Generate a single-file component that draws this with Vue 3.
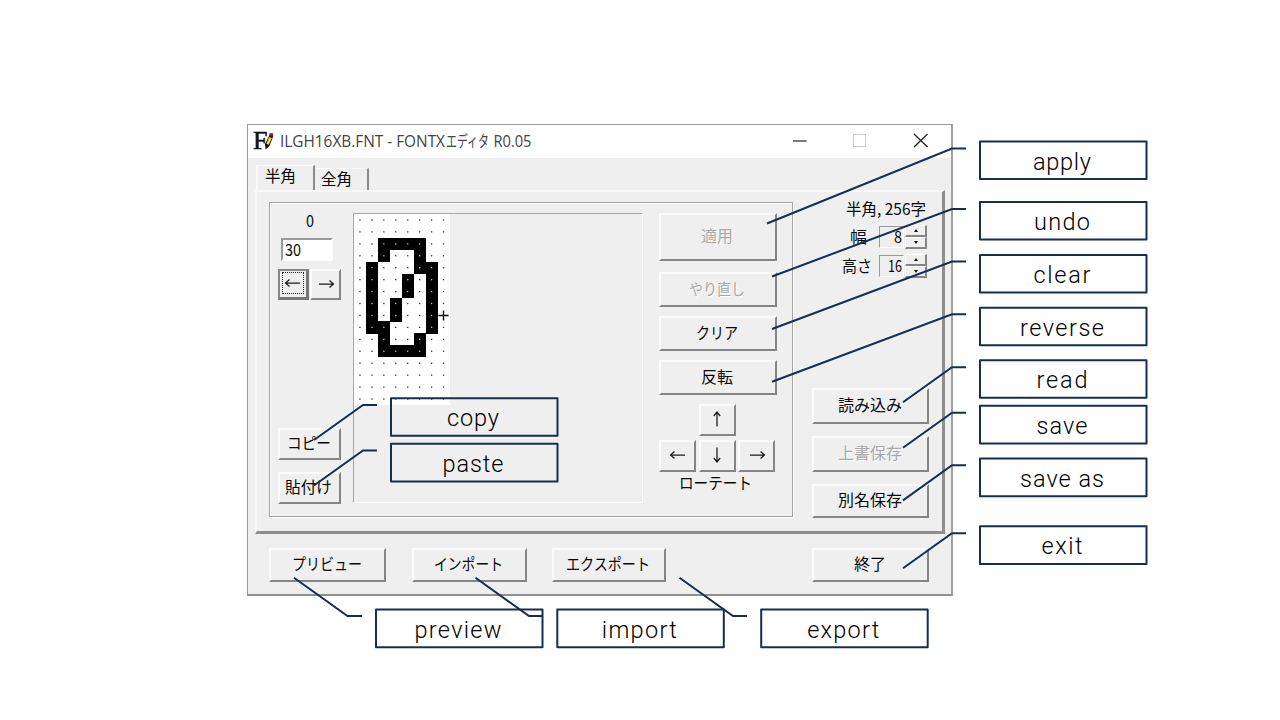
<script setup>
import { h } from 'vue'

const family = '"Noto Sans CJK JP", "Liberation Sans", sans-serif'

// Dialog caption condensed to a fixed width
const Label = (p) =>
  h('svg', { width: p.w, height: 20, viewBox: `0 0 ${p.w} 20`, style: { overflow: 'visible', display: 'block', flex: 'none' } }, [
    h('text', { x: -1, y: 15.5, 'font-family': family, 'font-size': p.size || 16, fill: p.disabled ? '#a8a8a8' : '#080808', textLength: p.w, lengthAdjust: 'spacingAndGlyphs', style: p.disabled ? { textShadow: '1px 1px #fff' } : null }, p.text),
  ])
Label.props = ['text', 'w', 'disabled', 'size']

const arrowPaths = {
  left: 'M1.5 9H16M5.5 5.5L1.5 9L5.5 12.5',
  right: 'M2 9H16.5M12.5 5.5L16.5 9L12.5 12.5',
  up: 'M9 2V16.5M5.8 6L9 2L12.2 6',
  down: 'M9 1.5V16M5.8 12L9 16L12.2 12',
}
const Arrow = (p) =>
  h('svg', { width: 18, height: 18, viewBox: '0 0 18 18', style: { display: 'block' } }, [
    h('path', { d: arrowPaths[p.dir], fill: 'none', stroke: '#1a1a1a', 'stroke-width': 1.25 }),
  ])
Arrow.props = ['dir']

const glyph = [
  '........', '........', '..####..', '..#..#..', '.#...##.', '.#..#.#.', '.#..#.#.', '.#.#..#.',
  '.#.#..#.', '.##...#.', '..#..#..', '..####..', '........', '........', '........', '........',
]
const step = 11.94
const cells = glyph.flatMap((row, r) => [...row].map((v, c) => ({ x: c * step, y: r * step, on: v === '#' })))

const side = 979
const callouts = [
  { t: 'apply', x: side, y: 140.5, w: 58, line: '767,223.5 952,148.5 966,148.5' },
  { t: 'undo', x: side, y: 201, w: 56, line: '772,276.5 952,209 966,209' },
  { t: 'clear', x: side, y: 254, w: 57, line: '772,329 952,261.5 966,261.5' },
  { t: 'reverse', x: side, y: 306.7, w: 84, line: '772,381.8 952,314.3 966,314.3' },
  { t: 'read', x: side, y: 359.2, w: 51, line: '903,402.3 952,367.3 966,367.3' },
  { t: 'save', x: side, y: 404.8, w: 51, line: '903,447.7 952,412.7 966,412.7' },
  { t: 'save as', x: side, y: 457.6, w: 84, line: '903,500.4 952,465.3 966,465.3' },
  { t: 'exit', x: side, y: 525.3, w: 41, line: '903,568.3 952,533.3 966,533.3' },
  { t: 'copy', x: 390, y: 397.2, w: 52, line: '314,440 363,405 377,405' },
  { t: 'paste', x: 390, y: 442.8, w: 61, line: '314,485.5 363,450.5 377,450.5' },
  { t: 'preview', x: 375, y: 608.6, w: 87, line: '294,577.7 347.5,616 362,616' },
  { t: 'import', x: 556.3, y: 608.6, w: 75, line: '475.5,577.7 529,616 543,616' },
  { t: 'export', x: 760.2, y: 608.6, w: 72, line: '679.5,577.7 733,616 747,616' },
]
</script>

<template>
  <main class="stage">
    <section class="window">
      <header class="titlebar">
        <svg class="app-icon" width="22" height="22" viewBox="0 0 22 22">
          <text x="0" y="19" font-family="Liberation Serif, serif" font-size="25" textLength="14.5" lengthAdjust="spacingAndGlyphs" fill="#111" stroke="#111" stroke-width=".5">F</text>
          <path d="M17 4L20.5 5.5L16.5 16L12.5 19.5L12 14Z" fill="#111" />
          <path d="M16.2 7L18.8 8L15.8 14.8L13.4 13.8Z" fill="#f2e51c" />
          <path d="M16.2 3.5L19.8 3L20 6.8L17 6.5Z" fill="#7d1e1a" />
        </svg>
        <svg class="title" width="252" height="24" viewBox="0 0 252 24" fill="#444" font-size="16" font-family="Open Sans, Noto Sans CJK JP, sans-serif">
          <text x="0" y="17.5" textLength="165" lengthAdjust="spacingAndGlyphs">ILGH16XB.FNT - FONTX</text>
          <text x="166" y="17.5" textLength="43" lengthAdjust="spacingAndGlyphs">エディタ</text>
          <text x="213.5" y="17.5" textLength="38" lengthAdjust="spacingAndGlyphs">R0.05</text>
        </svg>
        <svg class="controls" width="136" height="16" viewBox="0 0 136 16" fill="none">
          <path d="M1 9H14.5" stroke="#333" stroke-width="1.3" />
          <rect x="61.5" y="2.5" width="12" height="12" stroke="#ccc" />
          <path d="M122 2L135.500 15M135.500 2L122 15" stroke="#222" stroke-width="1.3" />
        </svg>
      </header>

      <nav class="tabs">
        <div class="tab active"><Label text="半角" :w="31" /></div>
        <div class="tab"><Label text="全角" :w="31" /></div>
      </nav>

      <div class="panel">
        <div class="group">
          <div class="code-col">
            <div class="char"><Label text="0" :w="8" /></div>
            <div class="field code"><Label text="30" :w="16" /></div>
            <div class="pair">
              <button class="btn focused"><span class="dotted"><Arrow dir="left" /></span></button>
              <button class="btn"><Arrow dir="right" /></button>
            </div>
            <button class="btn copy"><Label text="コピー" :w="44" /></button>
            <button class="btn paste"><Label text="貼付け" :w="47" /></button>
          </div>

          <div class="canvas">
            <svg width="96" height="191" viewBox="0 0 96 191">
              <rect width="96" height="191" fill="#fff" />
              <template v-for="(c, i) in cells" :key="i">
                <rect v-if="c.on" :x="c.x" :y="c.y" width="12.1" height="12.1" fill="#000" shape-rendering="crispEdges" />
                <rect :x="c.x + 5.3" :y="c.y + 5.3" width="1.3" height="1.3" :fill="c.on ? '#bbb' : '#333'" />
              </template>
              <path d="M84.500 101.500H94.500M89.500 96.500V106.500" stroke="#000" stroke-width="1.4" />
            </svg>
          </div>

          <div class="edit-col">
            <button class="btn tall"><Label text="適用" :w="32" disabled="1" /></button>
            <button class="btn undo"><Label text="やり直し" :w="56" disabled="1" /></button>
            <button class="btn clear"><Label text="クリア" :w="42" /></button>
            <button class="btn reverse"><Label text="反転" :w="32" /></button>
            <div class="arrows">
              <button class="btn up"><Arrow dir="up" /></button>
              <button class="btn"><Arrow dir="left" /></button>
              <button class="btn"><Arrow dir="down" /></button>
              <button class="btn"><Arrow dir="right" /></button>
            </div>
            <div class="rotate"><Label text="ローテート" :w="73" /></div>
          </div>
        </div>

        <aside class="info">
          <div class="summary"><Label text="半角, 256字" :w="80" /></div>
          <div class="size-row">
            <Label text="幅" :w="17" />
            <div class="field num"><Label text="8" :w="8" /></div>
            <div class="spin"><i class="inc"></i><i class="dec"></i></div>
          </div>
          <div class="size-row">
            <Label text="高さ" :w="30" />
            <div class="field num"><Label text="16" :w="14" /></div>
            <div class="spin"><i class="inc"></i><i class="dec"></i></div>
          </div>
          <div class="files">
            <button class="btn"><Label text="読み込み" :w="64" /></button>
            <button class="btn"><Label text="上書保存" :w="64" disabled="1" /></button>
            <button class="btn last"><Label text="別名保存" :w="64" /></button>
          </div>
        </aside>
      </div>

      <footer class="bottom">
        <button class="btn b1"><Label text="プリビュー" :w="70" /></button>
        <button class="btn b2"><Label text="インポート" :w="69" /></button>
        <button class="btn b3"><Label text="エクスポート" :w="84" /></button>
        <button class="btn b4"><Label text="終了" :w="32" /></button>
      </footer>
    </section>

    <svg class="annotations" width="1280" height="720" viewBox="0 0 1280 720">
      <g v-for="c in callouts" :key="c.t">
        <polyline :points="c.line" fill="none" stroke="#172e50" stroke-width="2" />
        <rect :x="c.x + 1" :y="c.y + 1" width="166.500" height="37.600" fill="none" stroke="#172e50" stroke-width="2" stroke-linejoin="round" />
        <text :x="c.x + 83 - c.w / 2" :y="c.y + 29" :textLength="c.w" font-family="Roboto, sans-serif" font-size="23.5" font-weight="300" fill="#000">{{ c.t }}</text>
      </g>
    </svg>
  </main>
</template>

<style scoped>
.stage {
  position: relative;
  width: 1280px;
  height: 720px;
  overflow: hidden;
  background: #fff;
  box-sizing: border-box;
  padding: 124px 0 0 247px;
}
.stage * { box-sizing: border-box; }
.window {
  width: 706px;
  height: 472px;
  background: #efefef;
  border: 1px solid #999;
  border-right: 2px solid #a0a0a0;
  border-bottom: 2px solid #909090;
}
.titlebar {
  display: flex;
  height: 33px;
  background: #fff;
  padding-left: 5px;
}
.app-icon { margin-top: 5px; overflow: visible; }
.title { margin: 4px 0 0 5px; overflow: visible; }
.controls { margin: 7px 0 0 260px; }
.tabs {
  display: flex;
  align-items: flex-end;
  height: 32px;
  padding-left: 8px;
}
.tab {
  width: 54px;
  height: 22px;
  padding: 0 0 0 7px;
  border-top: 1px solid #fafafa;
  border-right: 2px solid #8b8b8b;
}
.tab.active {
  width: 59px;
  height: 25px;
  padding: 0 0 0 8px;
  border-left: 2px solid #fafafa;
}
.panel {
  display: flex;
  width: 690px;
  height: 344px;
  margin-left: 7px;
  border-top: 2px solid #f9f9f9;
  border-left: 2px solid #f9f9f9;
  border-right: 3px solid #8e8e8e;
  border-bottom: 3px solid #8e8e8e;
}
.group {
  display: flex;
  width: 524px;
  height: 315px;
  margin: 10px 0 0 12px;
  border: 1px solid #a3a3a3;
  box-shadow: inset 1px 1px #fff, 1px 1px #fff;
}
.btn {
  display: flex;
  align-items: center;
  justify-content: center;
  margin: 0;
  padding: 0 0 2px;
  background: #efefef;
  border: 2px solid;
  border-color: #fbfbfb #858585 #858585 #fbfbfb;
  border-radius: 0;
}
.field {
  display: flex;
  border: 1px solid;
  border-color: #999 #fff #fff #999;
}
.code-col { width: 83px; padding-left: 8px; }
.char { display: flex; height: 35px; padding: 8px 0 0 29px; }
.code {
  width: 52px;
  height: 23px;
  margin-left: 3px;
  padding-left: 3px;
  background: #fff;
  border-width: 2px;
}
.pair { display: flex; gap: 1px; margin-top: 8px; }
.pair .btn { width: 31px; height: 31px; }
.focused { border-color: #888 #777 #777 #888; border-width: 2px 3px 3px 2px; }
.dotted { display: flex; border: 1px dotted #222; padding: 1px; width: 22px; height: 22px; }
.copy { width: 63px; height: 32px; margin-top: 128px; }
.paste { width: 63px; height: 32px; margin-top: 12px; }
.canvas {
  width: 290px;
  height: 290px;
  margin-top: 10px;
  border: 1px solid;
  border-color: #a6a6a6 #fff #fff #a6a6a6;
}
.canvas svg { display: block; }
.edit-col { width: 118px; margin: 10px 0 0 16px; }
.edit-col > .btn { width: 118px; }
.tall { height: 48px; }
.undo { height: 35px; margin-top: 11px; }
.clear { height: 35px; margin-top: 9px; }
.reverse { height: 35px; margin-top: 9px; }
.arrows {
  display: grid;
  grid-template-columns: repeat(3, 37px);
  grid-auto-rows: 32px;
  gap: 4px 2.500px;
  margin-top: 9px;
}
.up { grid-column: 2; }
.arrows .btn:nth-child(2) { grid-column: 1; }
.rotate { display: flex; margin: 1px 0 0 21px; }
.info { width: 130px; margin-left: 19px; padding-top: 7px; }
.summary { display: flex; height: 23px; padding-left: 35px; }
.size-row {
  display: flex;
  align-items: center;
  justify-content: flex-end;
  height: 29px;
  width: 115px;
}
.num {
  width: 25px;
  height: 22px;
  justify-content: flex-end;
  align-items: center;
  margin-left: 6px;
  padding-right: 0;
}
.size-row:nth-child(2) .num { margin-left: 11px; }
.spin { width: 22px; height: 24px; display: grid; grid-template-rows: 12px 12px; margin-left: 1px; }
.spin i {
  display: flex;
  align-items: center;
  justify-content: center;
  border: 1px solid;
  border-color: #fff #858585 #858585 #fff;
  border-right-width: 2px;
  border-bottom-width: 2px;
}
.spin i::after { content: ""; border: 2px solid transparent; }
.spin .inc::after { border-top: 0; border-bottom: 3px solid #111; }
.spin .dec::after { border-bottom: 0; border-top: 3px solid #111; }
.files { display: flex; flex-direction: column; gap: 12px; margin-top: 108px; }
.files .btn { width: 117px; height: 36px; }
.files .last { height: 34px; }
.bottom { display: flex; padding: 14px 0 0 21px; }
.bottom .btn { height: 34px; }
.bottom .b1 { width: 117px; }
.bottom .b2 { width: 115px; margin-left: 26px; }
.bottom .b3 { width: 114px; margin-left: 25px; }
.bottom .b4 { width: 117px; margin-left: 146px; }
.annotations { position: absolute; left: 0; top: 0; }
</style>
